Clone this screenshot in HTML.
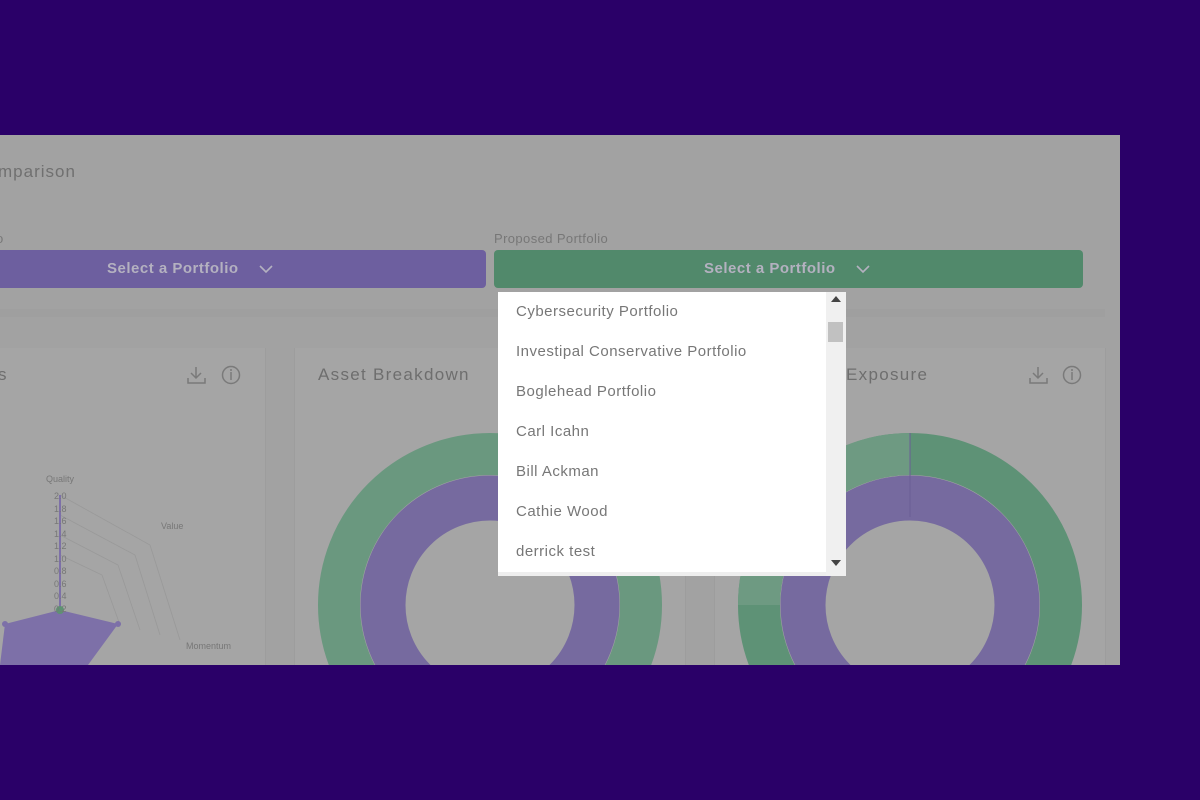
<!DOCTYPE html>
<html><head><style>
*{margin:0;padding:0;box-sizing:border-box}
body{width:1200px;height:800px;background:#2a0068;position:relative;overflow:hidden;font-family:"Liberation Sans",sans-serif}
#pg{position:absolute;left:0;top:135px;width:1120px;height:530px;background:#a2a2a2;overflow:hidden}
.t{position:absolute;color:#6e6e6e;white-space:nowrap}
.btn{position:absolute;height:38px;border-radius:4px;color:#b4b1c0;font-weight:bold;font-size:15px;line-height:38px;letter-spacing:0.5px}
.btn span{position:absolute;white-space:nowrap}
.btn svg{position:absolute;top:14px}
.card{position:absolute;top:213px;height:330px;background:#a5a5a5;border-left:1px solid #9d9d9d;border-right:1px solid #9d9d9d}
#dd{position:absolute;left:498px;top:157px;width:348px;height:284px;background:#fff}
#dd div{position:absolute;left:18px;font-size:15px;color:#777;letter-spacing:0.5px}
</style></head><body>
<div id="pg">
<div class="t" style="left:-2px;top:27px;font-size:17px;color:#707070;letter-spacing:1px">mparison</div>
<div class="t" style="left:494px;top:96px;font-size:13px;color:#777;letter-spacing:0.4px">Proposed Portfolio</div>
<div class="t" style="left:-4px;top:96px;font-size:13px;color:#777">o</div>
<div class="btn" style="left:-6px;top:115px;width:492px;background:#6d5f9f"><span style="left:113px">Select a Portfolio</span><svg style="left:265px" width="14" height="10"><path d="M1 2l6 6 6-6" fill="none" stroke="#b4b1c0" stroke-width="1.6"/></svg></div>
<div class="btn" style="left:494px;top:115px;width:589px;background:#51896b"><span style="left:210px">Select a Portfolio</span><svg style="left:362px" width="14" height="10"><path d="M1 2l6 6 6-6" fill="none" stroke="#b4b1c0" stroke-width="1.6"/></svg></div>
<div style="position:absolute;left:0;top:174px;width:1105px;height:8px;background:#9f9f9f"></div>
<div class="card" style="left:-2px;width:268px"></div>
<div class="card" style="left:294px;width:392px"></div>
<div class="card" style="left:714px;width:392px"></div>
<div class="t" style="left:-2px;top:230px;font-size:17px">s</div>
<div class="t" style="left:318px;top:230px;font-size:17px;letter-spacing:1.3px">Asset Breakdown</div>
<div class="t" style="left:846px;top:230px;font-size:17px;letter-spacing:1.3px">Exposure</div>
<svg style="position:absolute;left:0;top:0" width="1120" height="530">
<g fill="none" stroke="#7a7a7a" stroke-width="1.5">
<path d="M196 232v11M191 238l5 5 5-5M188 243v5h17v-5"/>
<circle cx="231" cy="240" r="8.5"/><path d="M231 237v8"/>
<path d="M1038 232v11M1033 238l5 5 5-5M1030 243v5h17v-5"/>
<circle cx="1072" cy="240" r="8.5"/><path d="M1072 237v8"/>
</g>
<circle cx="231" cy="235" r="1" fill="#7a7a7a"/><circle cx="1072" cy="235" r="1" fill="#7a7a7a"/>
<g fill="none">
<circle cx="490" cy="470" r="151" stroke="#6a987f" stroke-width="42"/>
<circle cx="490" cy="470" r="107" stroke="#766a9f" stroke-width="45"/>
<circle cx="910" cy="470" r="151" stroke="#5e9276" stroke-width="42"/>
<path d="M738 470A172 172 0 0 1 910 298V340A130 130 0 0 0 780 470Z" fill="#6e9a82" stroke="none"/>
<circle cx="910" cy="470" r="107" stroke="#766a9f" stroke-width="45"/>
<path d="M910 298v84" stroke="#6a5e95"/>
</g>
<g fill="none" stroke="#999" stroke-width="0.8">
<path d="M60 360L150 410 180 505M60 380L135 420 160 500M60 400L118 430 140 495M60 420L102 440 120 490"/>
</g>
<path d="M60 475L118 489 88 530 0 530 5 489Z" fill="#7d70a8"/>
<path d="M60 360V475" stroke="#7d70a8" stroke-width="2"/>
<circle cx="60" cy="475" r="4" fill="#5e9272"/><circle cx="118" cy="489" r="3" fill="#7d70a8"/><circle cx="5" cy="489" r="3" fill="#7d70a8"/>
<g font-size="9" fill="#777" font-family="Liberation Sans">
<text x="46" y="347">Quality</text><text x="161" y="394">Value</text><text x="186" y="514">Momentum</text>
<text x="54" y="364">2.0</text><text x="54" y="377">1.8</text><text x="54" y="389">1.6</text><text x="54" y="402">1.4</text><text x="54" y="414">1.2</text><text x="54" y="427">1.0</text><text x="54" y="439">0.8</text><text x="54" y="452">0.6</text><text x="54" y="464">0.4</text><text x="54" y="477">0.2</text>
</g>
</svg>
<div id="dd">
<div style="top:11px">Cybersecurity Portfolio</div>
<div style="top:51px">Investipal Conservative Portfolio</div>
<div style="top:91px">Boglehead Portfolio</div>
<div style="top:131px">Carl Icahn</div>
<div style="top:171px">Bill Ackman</div>
<div style="top:211px">Cathie Wood</div>
<div style="top:251px">derrick test</div>
<span style="position:absolute;left:0;top:280px;width:328px;height:4px;background:#eee"></span>
<span style="position:absolute;left:328px;top:0;width:20px;height:284px;background:#f0f0f0"></span>
<span style="position:absolute;left:330px;top:30px;width:15px;height:20px;background:#c1c1c1"></span>
<span style="position:absolute;left:333px;top:4px;border:5px solid transparent;border-bottom:6px solid #444;border-top:0"></span>
<span style="position:absolute;left:333px;top:268px;border:5px solid transparent;border-top:6px solid #444;border-bottom:0"></span>
</div>
</div>
</body></html>
